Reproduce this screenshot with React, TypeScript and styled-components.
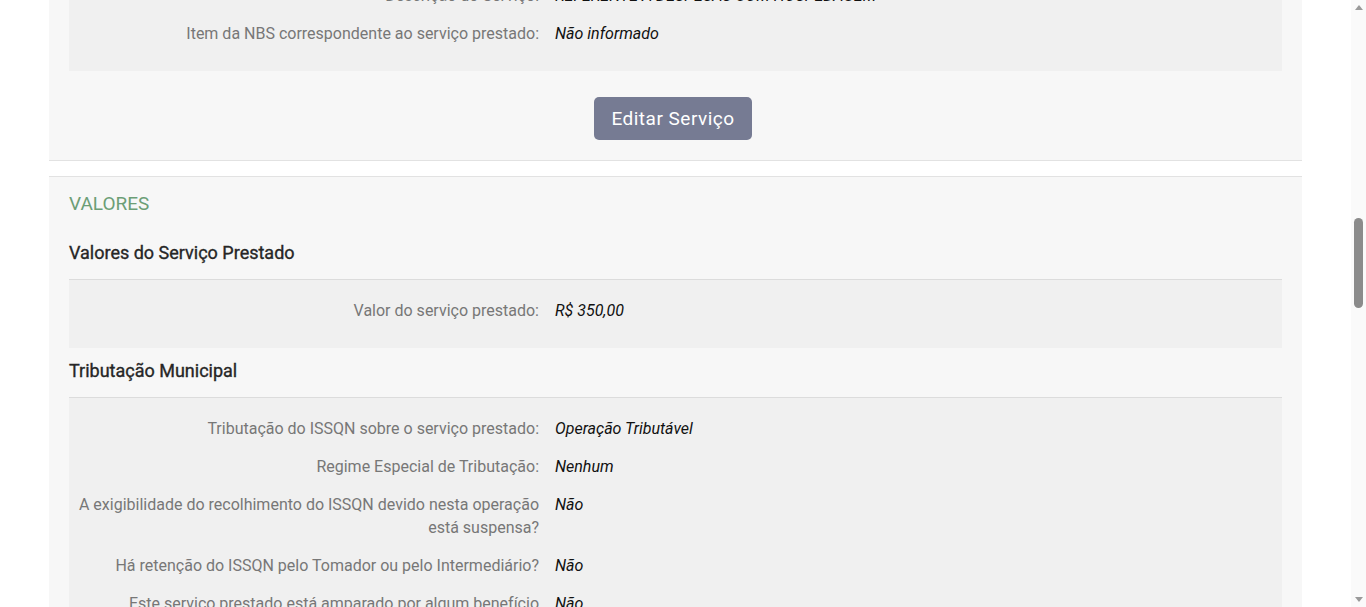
import { useLayoutEffect } from 'react';
import styled, { createGlobalStyle } from 'styled-components';

const GlobalStyle = createGlobalStyle`
  html {
    scrollbar-width: none;
  }
  html, body {
    margin: 0;
    padding: 0;
    background: #fff;
  }
  body {
    font-family: Roboto, 'Liberation Sans', Arial, sans-serif;
    font-size: 16px;
    color: #333;
  }
  * {
    box-sizing: border-box;
  }
`;

const Page = styled.main`
  width: 1253px;
  margin: 0 0 0 49px;
  padding-bottom: 40px;
`;

const Panel = styled.section`
  background: #f7f7f7;
  border-top: 1px solid #e2e2e2;
  border-bottom: 1px solid #e2e2e2;
  padding: 15px 20px 20px;
  margin-bottom: 15px;
`;

const SectionTitle = styled.h2`
  margin: 0 0 14px;
  font-size: 19px;
  line-height: 24px;
  font-weight: 400;
  color: #6c9e76;
  text-transform: uppercase;
`;

const GroupTitle = styled.h3`
  margin: 0 0 14px;
  padding-top: 11px;
  font-size: 18px;
  line-height: 24px;
  font-weight: 400;
  color: #262626;
  -webkit-text-stroke: 0.35px #262626;
`;

const Rows = styled.dl`
  margin: 0;
  padding: 12px 0 18px;
  background: #f0f0f0;
  border-top: 1px solid #dcdcdc;
`;

const Row = styled.div`
  display: grid;
  grid-template-columns: 470px 1fr;
  column-gap: 16px;
  padding: 7px 0 8px;
  line-height: 23px;
`;

const Label = styled.dt`
  padding-left: 8px;
  text-align: right;
  color: #777;
`;

const Value = styled.dd`
  margin: 0;
  color: #111;
  font-style: italic;
`;

const Actions = styled.div`
  display: flex;
  justify-content: center;
  padding: 26px 5px 0 0;
`;

const Button = styled.button`
  height: 43px;
  padding: 0 17px;
  border: none;
  border-radius: 5px;
  background: #767b93;
  color: #fff;
  font-family: Roboto, 'Liberation Sans', Arial, sans-serif;
  font-size: 19px;
  line-height: 40px;
  letter-spacing: 0.5px;
  cursor: pointer;
`;

const Footer = styled.footer`
  display: flex;
  flex-direction: column;
  align-items: center;
  justify-content: center;
  gap: 8px;
  min-height: 213px;
  color: #888;
  font-size: 14px;
`;

/* browser-like scrollbar drawn over the right edge */
const ScrollTrack = styled.div`
  position: fixed;
  top: 0;
  right: 0;
  width: 15px;
  height: 100vh;
  background: #fafafa;
  display: flex;
  flex-direction: column;
  justify-content: space-between;
  align-items: center;
`;

const ScrollArrow = styled.span<{ $down?: boolean }>`
  display: block;
  width: 0;
  height: 0;
  margin: ${(p) => (p.$down ? '0 0 5px' : '5px 0 0')};
  border-left: 4.5px solid transparent;
  border-right: 4.5px solid transparent;
  ${(p) => (p.$down ? 'border-top: 5px solid #9a9a9a;' : 'border-bottom: 5px solid #9a9a9a;')}
`;

const ScrollThumb = styled.span`
  position: absolute;
  top: 218px;
  left: 3px;
  width: 9px;
  height: 90px;
  border-radius: 5px;
  background: #8b8b8b;
`;

type Item = [string, string];

function Fields({ items, anchor }: { items: Item[]; anchor?: string }) {
  return (
    <Rows>
      {items.map(([label, value]) => (
        <Row key={label} data-anchor={label === anchor ? 'true' : undefined}>
          <Label>{label}</Label>
          <Value>{value}</Value>
        </Row>
      ))}
    </Rows>
  );
}

const geral: Item[] = [
  ['Número da DPS:', '2'],
  ['Série da DPS:', '900'],
  ['Data de Competência:', '10/03/2025'],
  ['Data e Hora da emissão da DPS:', '10/03/2025 14:32:08'],
  ['Tipo de Emitente:', 'Prestador'],
];

const prestador: Item[] = [
  ['CPF/CNPJ:', '12.345.678/0001-90'],
  ['Nome/Nome Empresarial:', 'POUSADA RECANTO DO SOL LTDA'],
  ['Município:', 'Florianópolis/SC'],
  ['Regime de Apuração:', 'Simples Nacional'],
];

const tomador: Item[] = [
  ['CPF/CNPJ:', '98.765.432/0001-10'],
  ['Nome/Nome Empresarial:', 'EMPRESA EXEMPLO SERVIÇOS LTDA'],
  ['Telefone:', 'Não informado'],
  ['E-mail:', 'Não informado'],
  ['Município:', 'Curitiba/PR'],
];

const servico: Item[] = [
  ['Local da Prestação:', 'Florianópolis/SC'],
  ['Código de Tributação Nacional:', '09.01.01 - Hospedagem em hotéis, hotelaria marítima e congêneres'],
  ['Código de Tributação Municipal:', 'Não informado'],
  ['Descrição do Serviço:', 'REFERENTE A DESPESAS COM HOSPEDAGEM'],
  ['Item da NBS correspondente ao serviço prestado:', 'Não informado'],
];

const valores: Item[] = [['Valor do serviço prestado:', 'R$ 350,00']];

const tributacao: Item[] = [
  ['Tributação do ISSQN sobre o serviço prestado:', 'Operação Tributável'],
  ['Regime Especial de Tributação:', 'Nenhum'],
  ['A exigibilidade do recolhimento do ISSQN devido nesta operação está suspensa?', 'Não'],
  ['Há retenção do ISSQN pelo Tomador ou pelo Intermediário?', 'Não'],
  ['Este serviço prestado está amparado por algum benefício municipal?', 'Não'],
  ['Deseja informar alguma dedução/redução da base de cálculo do ISSQN?', 'Não'],
  ['Alíquota do ISSQN:', '2,00%'],
  ['Valor do ISSQN:', 'R$ 7,00'],
];

const federal: Item[] = [
  ['Situação Tributária do PIS/COFINS:', 'Nenhum'],
  ['Valor do PIS:', 'R$ 0,00'],
  ['Valor da COFINS:', 'R$ 0,00'],
  ['Há retenção de IRRF?', 'Não'],
  ['Valor do IRRF:', 'R$ 0,00'],
  ['Há retenção de CP?', 'Não'],
  ['Valor da CP:', 'R$ 0,00'],
  ['Há retenção de CSLL?', 'Não'],
  ['Valor da CSLL:', 'R$ 0,00'],
];

const tributos: Item[] = [
  ['Informar valor total aproximado dos tributos?', 'Não informar nenhum valor estimado'],
];

const totais: Item[] = [
  ['Valor do Serviço:', 'R$ 350,00'],
  ['Desconto Incondicionado:', 'R$ 0,00'],
  ['Desconto Condicionado:', 'R$ 0,00'],
  ['ISSQN Retido:', 'R$ 0,00'],
  ['Total de Retenções Federais:', 'R$ 0,00'],
  ['Valor Líquido da NFS-e:', 'R$ 350,00'],
];

const complementares: Item[] = [
  ['Número do documento de responsabilidade técnica:', 'Não informado'],
  ['Documento de referência:', 'Não informado'],
  ['Informações complementares:', 'Não informado'],
  ['Número do pedido:', 'Não informado'],
  ['Item do pedido:', 'Não informado'],
  ['Código da obra:', 'Não informado'],
];

export default function App() {
  useLayoutEffect(() => {
    const el = document.querySelector('[data-anchor="true"]');
    if (el) {
      const top = el.getBoundingClientRect().top + window.scrollY;
      window.scrollTo(0, top - 15);
    }
  }, []);

  return (
    <>
      <GlobalStyle />
      <Page>
        <Panel>
          <SectionTitle>Dados Gerais</SectionTitle>
          <GroupTitle>Identificação da DPS</GroupTitle>
          <Fields items={geral} />
          <Actions>
            <Button>Editar Dados Gerais</Button>
          </Actions>
        </Panel>
        <Panel>
          <SectionTitle>Pessoas</SectionTitle>
          <GroupTitle>Prestador do Serviço</GroupTitle>
          <Fields items={prestador} />
          <GroupTitle>Tomador do Serviço</GroupTitle>
          <Fields items={tomador} />
          <Actions>
            <Button>Editar Pessoas</Button>
          </Actions>
        </Panel>
        <Panel>
          <SectionTitle>Serviço</SectionTitle>
          <GroupTitle>Serviço Prestado</GroupTitle>
          <Fields items={servico} anchor="Item da NBS correspondente ao serviço prestado:" />
          <Actions>
            <Button>Editar Serviço</Button>
          </Actions>
        </Panel>
        <Panel>
          <SectionTitle>Valores</SectionTitle>
          <GroupTitle>Valores do Serviço Prestado</GroupTitle>
          <Fields items={valores} />
          <GroupTitle>Tributação Municipal</GroupTitle>
          <Fields items={tributacao} />
          <GroupTitle>Tributação Federal</GroupTitle>
          <Fields items={federal} />
          <GroupTitle>Valor Total dos Tributos</GroupTitle>
          <Fields items={tributos} />
          <GroupTitle>Totais</GroupTitle>
          <Fields items={totais} />
          <Actions>
            <Button>Editar Valores</Button>
          </Actions>
        </Panel>
        <Panel>
          <SectionTitle>Informações Complementares</SectionTitle>
          <GroupTitle>Outras Informações</GroupTitle>
          <Fields items={complementares} />
          <Actions>
            <Button>Emitir NFS-e</Button>
          </Actions>
        </Panel>
        <Footer>
          <span>Emissor Nacional da NFS-e</span>
          <span>Receita Federal do Brasil</span>
        </Footer>
      </Page>
      <ScrollTrack aria-hidden>
        <ScrollArrow />
        <ScrollThumb />
        <ScrollArrow $down />
      </ScrollTrack>
    </>
  );
}
